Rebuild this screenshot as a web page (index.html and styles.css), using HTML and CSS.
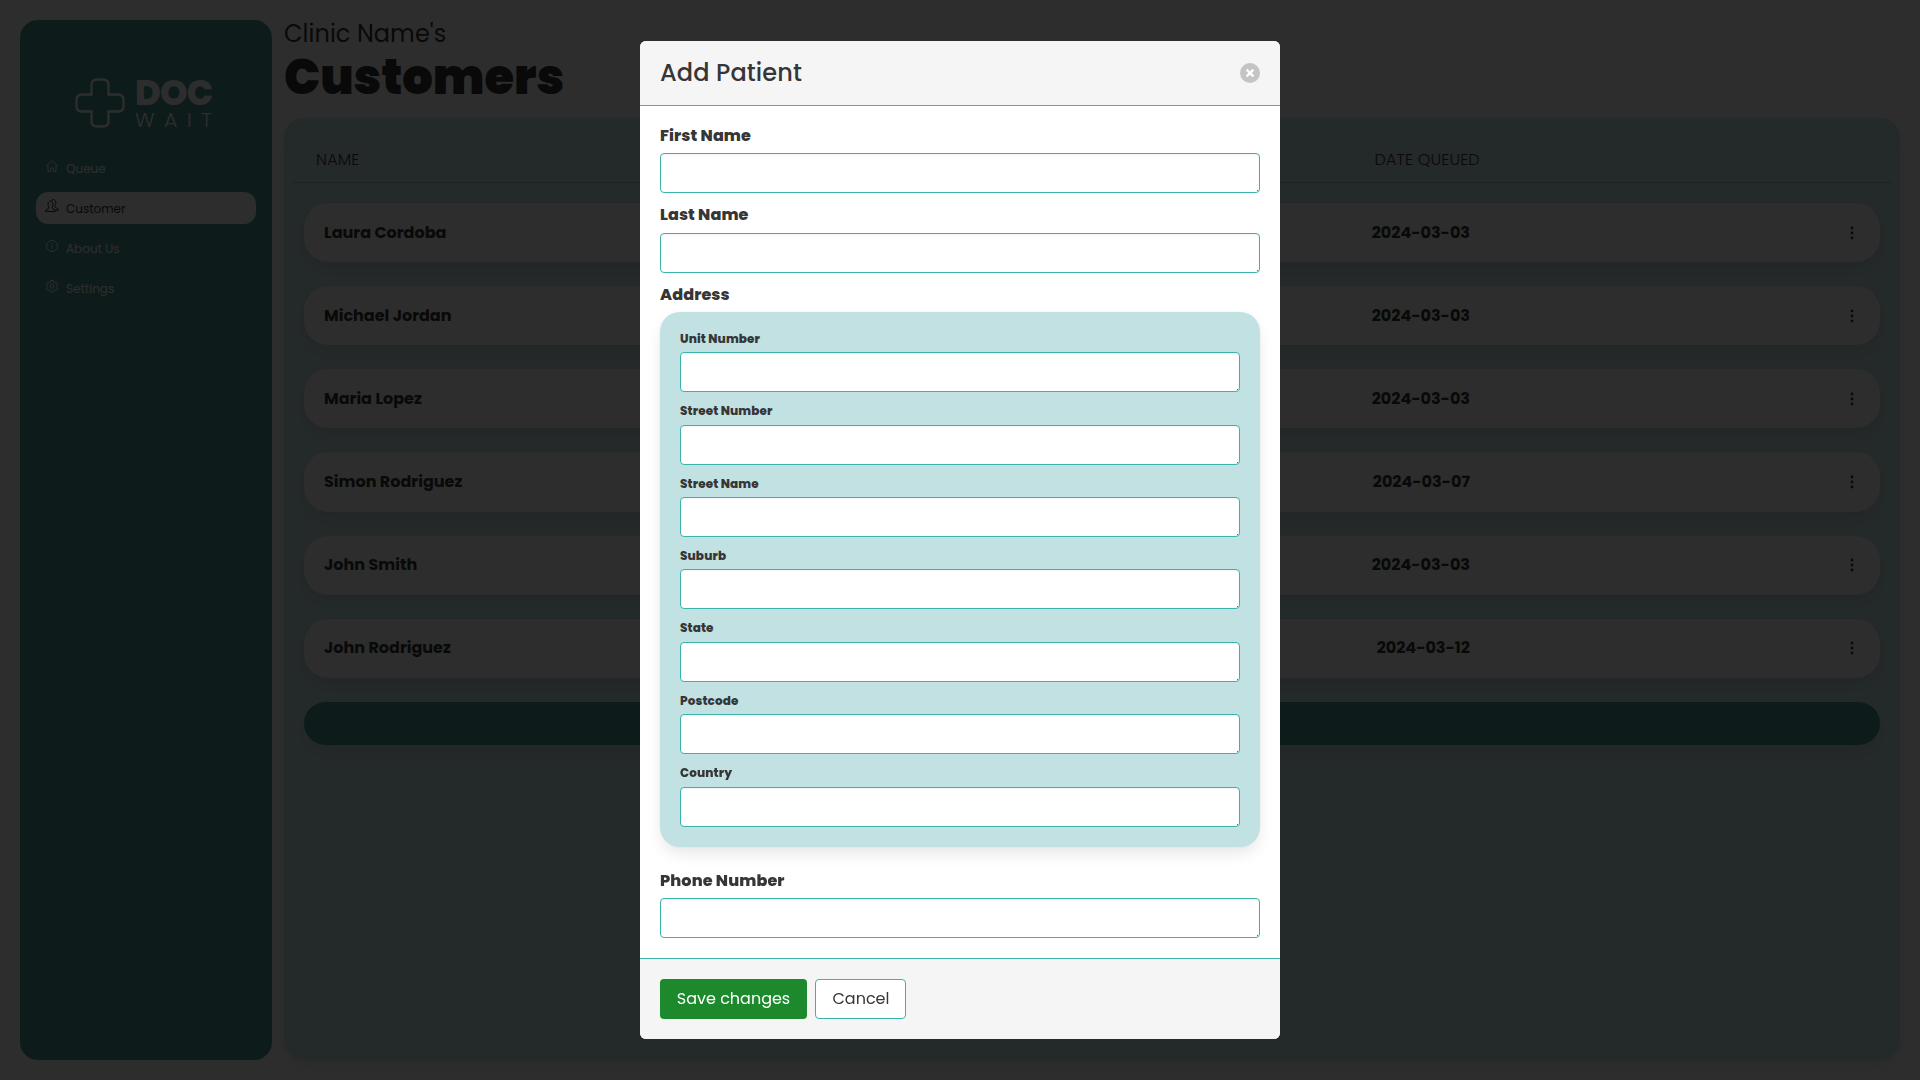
FILE: index.html
```html
<!DOCTYPE html>
<html lang="en">
<head>
<meta charset="utf-8">
<title>Customers</title>
<link rel="stylesheet" href="styles.css">
</head>
<body>
<div class="app">
  <aside class="sidebar">
    <div class="logo">
      <svg class="logo-cross" viewBox="0 0 50 50" fill="none" stroke="currentColor" stroke-width="2.300"><path d="M22 1.500h6q5.500 0 5.500 5.500v9.500h9.500q5.500 0 5.500 5.500v6q0 5.500-5.500 5.500h-9.500v9.500q0 5.500-5.500 5.500h-6q-5.500 0-5.500-5.500v-9.500h-9.500q-5.500 0-5.500-5.500v-6q0-5.500 5.500-5.500h9.500v-9.500q0-5.500 5.500-5.500z"/></svg>
      <div class="logo-text"><span class="logo-doc">DOC</span><span class="logo-wait">WAIT</span></div>
    </div>
    <nav class="menu">
      <a class="menu-item"><svg viewBox="0 0 14 14"><path d="M1.500 7 7 1.500 12.500 7M3 6v6.500h2.700V9h2.600v3.500H11V6"/></svg><span>Queue</span></a>
      <a class="menu-item active"><svg viewBox="0 0 14 14"><path d="M.7 12.500v-1.500l2.600-1.300.8-.7c-1.500-1.800-1.700-7 1.400-7s2.900 5.200 1.400 7l.8.700 2.600 1.300v1.500zM6.500 2c.4-1.100 1.100-1.400 1.900-1.400 3 0 2.900 4.900 1.300 7l.8.900 2.600 1.300v1.700h-2"/></svg><span>Customer</span></a>
      <a class="menu-item"><svg viewBox="0 0 14 14"><circle cx="7" cy="7" r="5.500"/><path d="M7 3.800v.9M7 5.700v4.500"/></svg><span>About Us</span></a>
      <a class="menu-item"><svg viewBox="0 0 14 14"><path d="m5.600 1.500h2.800l.4 1.600 1.200.7 1.600-.5 1.300 2.300-1.200 1.100v1.300l1.200 1.100-1.300 2.300-1.600-.5-1.200.7-.4 1.400H5.600l-.4-1.400-1.200-.7-1.600.5-1.300-2.300 1.200-1.100V6.700L1.100 5.600l1.300-2.300 1.600.5 1.200-.7z"/><circle cx="7" cy="7.200" r="2"/></svg><span>Settings</span></a>
    </nav>
  </aside>
  <main class="content">
    <div class="clinic">Clinic Name's</div>
    <h1 class="title">Customers</h1>
    <section class="panel">
      <div class="list-head"><span class="th-name">NAME</span><span class="th-date">DATE QUEUED</span></div>
      <div class="list">
        <div class="row"><span class="name">Laura Cordoba</span><span class="date">2024-03-03</span><svg class="dots" viewBox="0 0 4 14"><circle cx="2" cy="2" r="1.400"/><circle cx="2" cy="7" r="1.400"/><circle cx="2" cy="12" r="1.400"/></svg></div>
        <div class="row"><span class="name">Michael Jordan</span><span class="date">2024-03-03</span><svg class="dots" viewBox="0 0 4 14"><circle cx="2" cy="2" r="1.400"/><circle cx="2" cy="7" r="1.400"/><circle cx="2" cy="12" r="1.400"/></svg></div>
        <div class="row"><span class="name">Maria Lopez</span><span class="date">2024-03-03</span><svg class="dots" viewBox="0 0 4 14"><circle cx="2" cy="2" r="1.400"/><circle cx="2" cy="7" r="1.400"/><circle cx="2" cy="12" r="1.400"/></svg></div>
        <div class="row"><span class="name">Simon Rodriguez</span><span class="date">2024-03-07</span><svg class="dots" viewBox="0 0 4 14"><circle cx="2" cy="2" r="1.400"/><circle cx="2" cy="7" r="1.400"/><circle cx="2" cy="12" r="1.400"/></svg></div>
        <div class="row"><span class="name">John Smith</span><span class="date">2024-03-03</span><svg class="dots" viewBox="0 0 4 14"><circle cx="2" cy="2" r="1.400"/><circle cx="2" cy="7" r="1.400"/><circle cx="2" cy="12" r="1.400"/></svg></div>
        <div class="row"><span class="name">John Rodriguez</span><span class="date">2024-03-12</span><svg class="dots" viewBox="0 0 4 14"><circle cx="2" cy="2" r="1.400"/><circle cx="2" cy="7" r="1.400"/><circle cx="2" cy="12" r="1.400"/></svg></div>
        <div class="add-row"></div>
      </div>
    </section>
  </main>
</div>
<div class="overlay">
  <div class="modal">
    <header class="modal-head">
      <span class="modal-title">Add Patient</span>
      <svg class="close" viewBox="0 0 20 20"><circle cx="10" cy="10" r="10" fill="#c4c4c4"/><path d="m6.600 6.600 6.800 6.800m0-6.800-6.800 6.800" stroke="#fff" stroke-width="2.200"/></svg>
    </header>
    <div class="modal-body">
      <div class="field"><label>First Name</label><textarea></textarea></div>
      <div class="field"><label>Last Name</label><textarea></textarea></div>
      <div class="field"><label>Address</label>
        <div class="address">
          <div class="subfield"><label>Unit Number</label><textarea></textarea></div>
          <div class="subfield"><label>Street Number</label><textarea></textarea></div>
          <div class="subfield"><label>Street Name</label><textarea></textarea></div>
          <div class="subfield"><label>Suburb</label><textarea></textarea></div>
          <div class="subfield"><label>State</label><textarea></textarea></div>
          <div class="subfield"><label>Postcode</label><textarea></textarea></div>
          <div class="subfield"><label>Country</label><textarea></textarea></div>
        </div>
      </div>
      <div class="field phone"><label>Phone Number</label><textarea></textarea></div>
    </div>
    <footer class="modal-foot">
      <button class="btn save">Save changes</button>
      <button class="btn cancel">Cancel</button>
    </footer>
  </div>
</div>
</body>
</html>
```
FILE: styles.css
```css
* { box-sizing: border-box; }
html, body { margin: 0; height: 100%; overflow: hidden; }
body { font-family: Poppins, Inter, "Open Sans", sans-serif; font-size: 16px; line-height: 24px; color: #000; background: #fff; }
svg { display: block; flex: none; }

.app { display: flex; gap: 12px; height: 1080px; padding: 20px; }
.sidebar { width: 252px; flex: none; background: #1f837a; border-radius: 18px; color: #fff; }
.logo { display: flex; gap: 10px; padding: 57px 0 0 55px; height: 112px; }
.logo-cross { width: 50px; height: 50px; margin-top: 0.500px; }
.logo-text { display: flex; flex-direction: column; }
.logo-doc { font-weight: 800; font-size: 35px; line-height: 32px; letter-spacing: -0.800px; }
.logo-wait { font-weight: 300; font-size: 20.500px; line-height: 21px; letter-spacing: 9.500px; }

.menu { display: flex; flex-direction: column; gap: 8px; padding: 20px 16px; }
.menu-item { display: flex; align-items: center; gap: 8px; height: 32px; padding-left: 8px; border-radius: 12px; font-size: 12px; }
.menu-item svg { width: 14px; height: 14px; margin: -4px -0.500px 0 0.500px; fill: none; stroke: currentColor; stroke-width: 1; }
.menu-item.active { background: #fff; color: #000; }
.menu-item span { padding-top: 1px; }

.content { flex: 1; display: flex; flex-direction: column; min-width: 0; }
.clinic { height: 27px; font-size: 24px; line-height: 28px; letter-spacing: 0.050px; }
.title { margin: 0; height: 71px; font-size: 48px; font-weight: 900; line-height: 62px; }
.panel { flex: 1; background: #c1e1e2; border-radius: 20px; padding: 16px 8px; box-shadow: 0 8px 16px -2px rgba(10,10,10,.1), 0 0 0 1px rgba(10,10,10,.02); }
.list-head { display: flex; height: 49px; padding: 14px 24px 0; border-bottom: 1px solid #99b3b5; font-size: 16px; font-weight: 300; letter-spacing: 0.150px; }
.th-name { width: 1058.500px; }
.list { display: flex; flex-direction: column; gap: 24px; padding: 20px 12px; }
.row { display: flex; align-items: center; height: 59.150px; padding: 0 26px 0 20px; background: #f7fff7; border-radius: 24px; font-weight: 700; box-shadow: 0 8px 16px -2px rgba(10,10,10,.1), 0 0 0 1px rgba(10,10,10,.02); }
.name { width: 1042px; }
.date { width: 104px; text-align: right; white-space: nowrap; }
.dots { width: 4px; height: 14px; margin-left: auto; }
.add-row { height: 43px; background: #1f837a; border-radius: 24px; box-shadow: 0 8px 16px -2px rgba(10,10,10,.1); }

.overlay { position: fixed; inset: 0; display: flex; align-items: center; justify-content: center; background: rgba(10,10,10,.86); color: #363636; }
.modal { display: flex; flex-direction: column; width: 640px; height: 998px; border-radius: 6px; overflow: hidden; background: #fff; }
.modal-head { display: flex; align-items: center; justify-content: space-between; height: 65px; flex: none; padding: 0 20px; background: #f5f5f5; border-bottom: 1px solid #3bb3ab; }
.modal-title { font-size: 24px; line-height: 24px; font-weight: 500; letter-spacing: 0.120px; }
.close { width: 20px; height: 20px; }
.modal-body { flex: 1; padding: 18.400px 20px 0; }
label { display: block; font-weight: 800; white-space: nowrap; letter-spacing: 0.100px; }
.field > label { height: 28.600px; padding-top: 0.200px; font-size: 16px; line-height: 21.600px; }
.field { margin-bottom: 11px; }
textarea { display: block; width: 100%; height: 40px; padding: 8px 12px; border: 1px solid #3bb3ab; border-radius: 4px; background: linear-gradient(#666, #666) right 1px bottom 1px / 1px 1px no-repeat #fff; box-shadow: inset 0 1px 2px rgba(10,10,10,.05); resize: none; outline: 0; }
.address { display: flex; flex-direction: column; height: 535px; padding: 16px 20px 0; background: #c2e1e2; border-radius: 20px; box-shadow: 0 8px 16px -2px rgba(10,10,10,.1), 0 0 0 1px rgba(10,10,10,.02); }
.subfield { height: 72.400px; flex: none; }
.subfield label { height: 24px; padding-top: 0.600px; font-size: 12px; line-height: 20.700px; }
.phone { padding-top: 11.200px; }
.modal-foot { display: flex; gap: 8px; height: 81px; flex: none; padding: 20px; background: #f5f5f5; border-top: 1px solid #3bb3ab; }
.btn { height: 40px; padding: 0 0 2px; border: 1px solid #3bb3ab; border-radius: 4px; font-family: inherit; font-size: 16px; color: #363636; background: #fff; white-space: nowrap; }
.save { width: 147px; border-color: transparent; background: #1b892c; color: #fff; }
.cancel { width: 91px; padding-left: 1px; }
```
